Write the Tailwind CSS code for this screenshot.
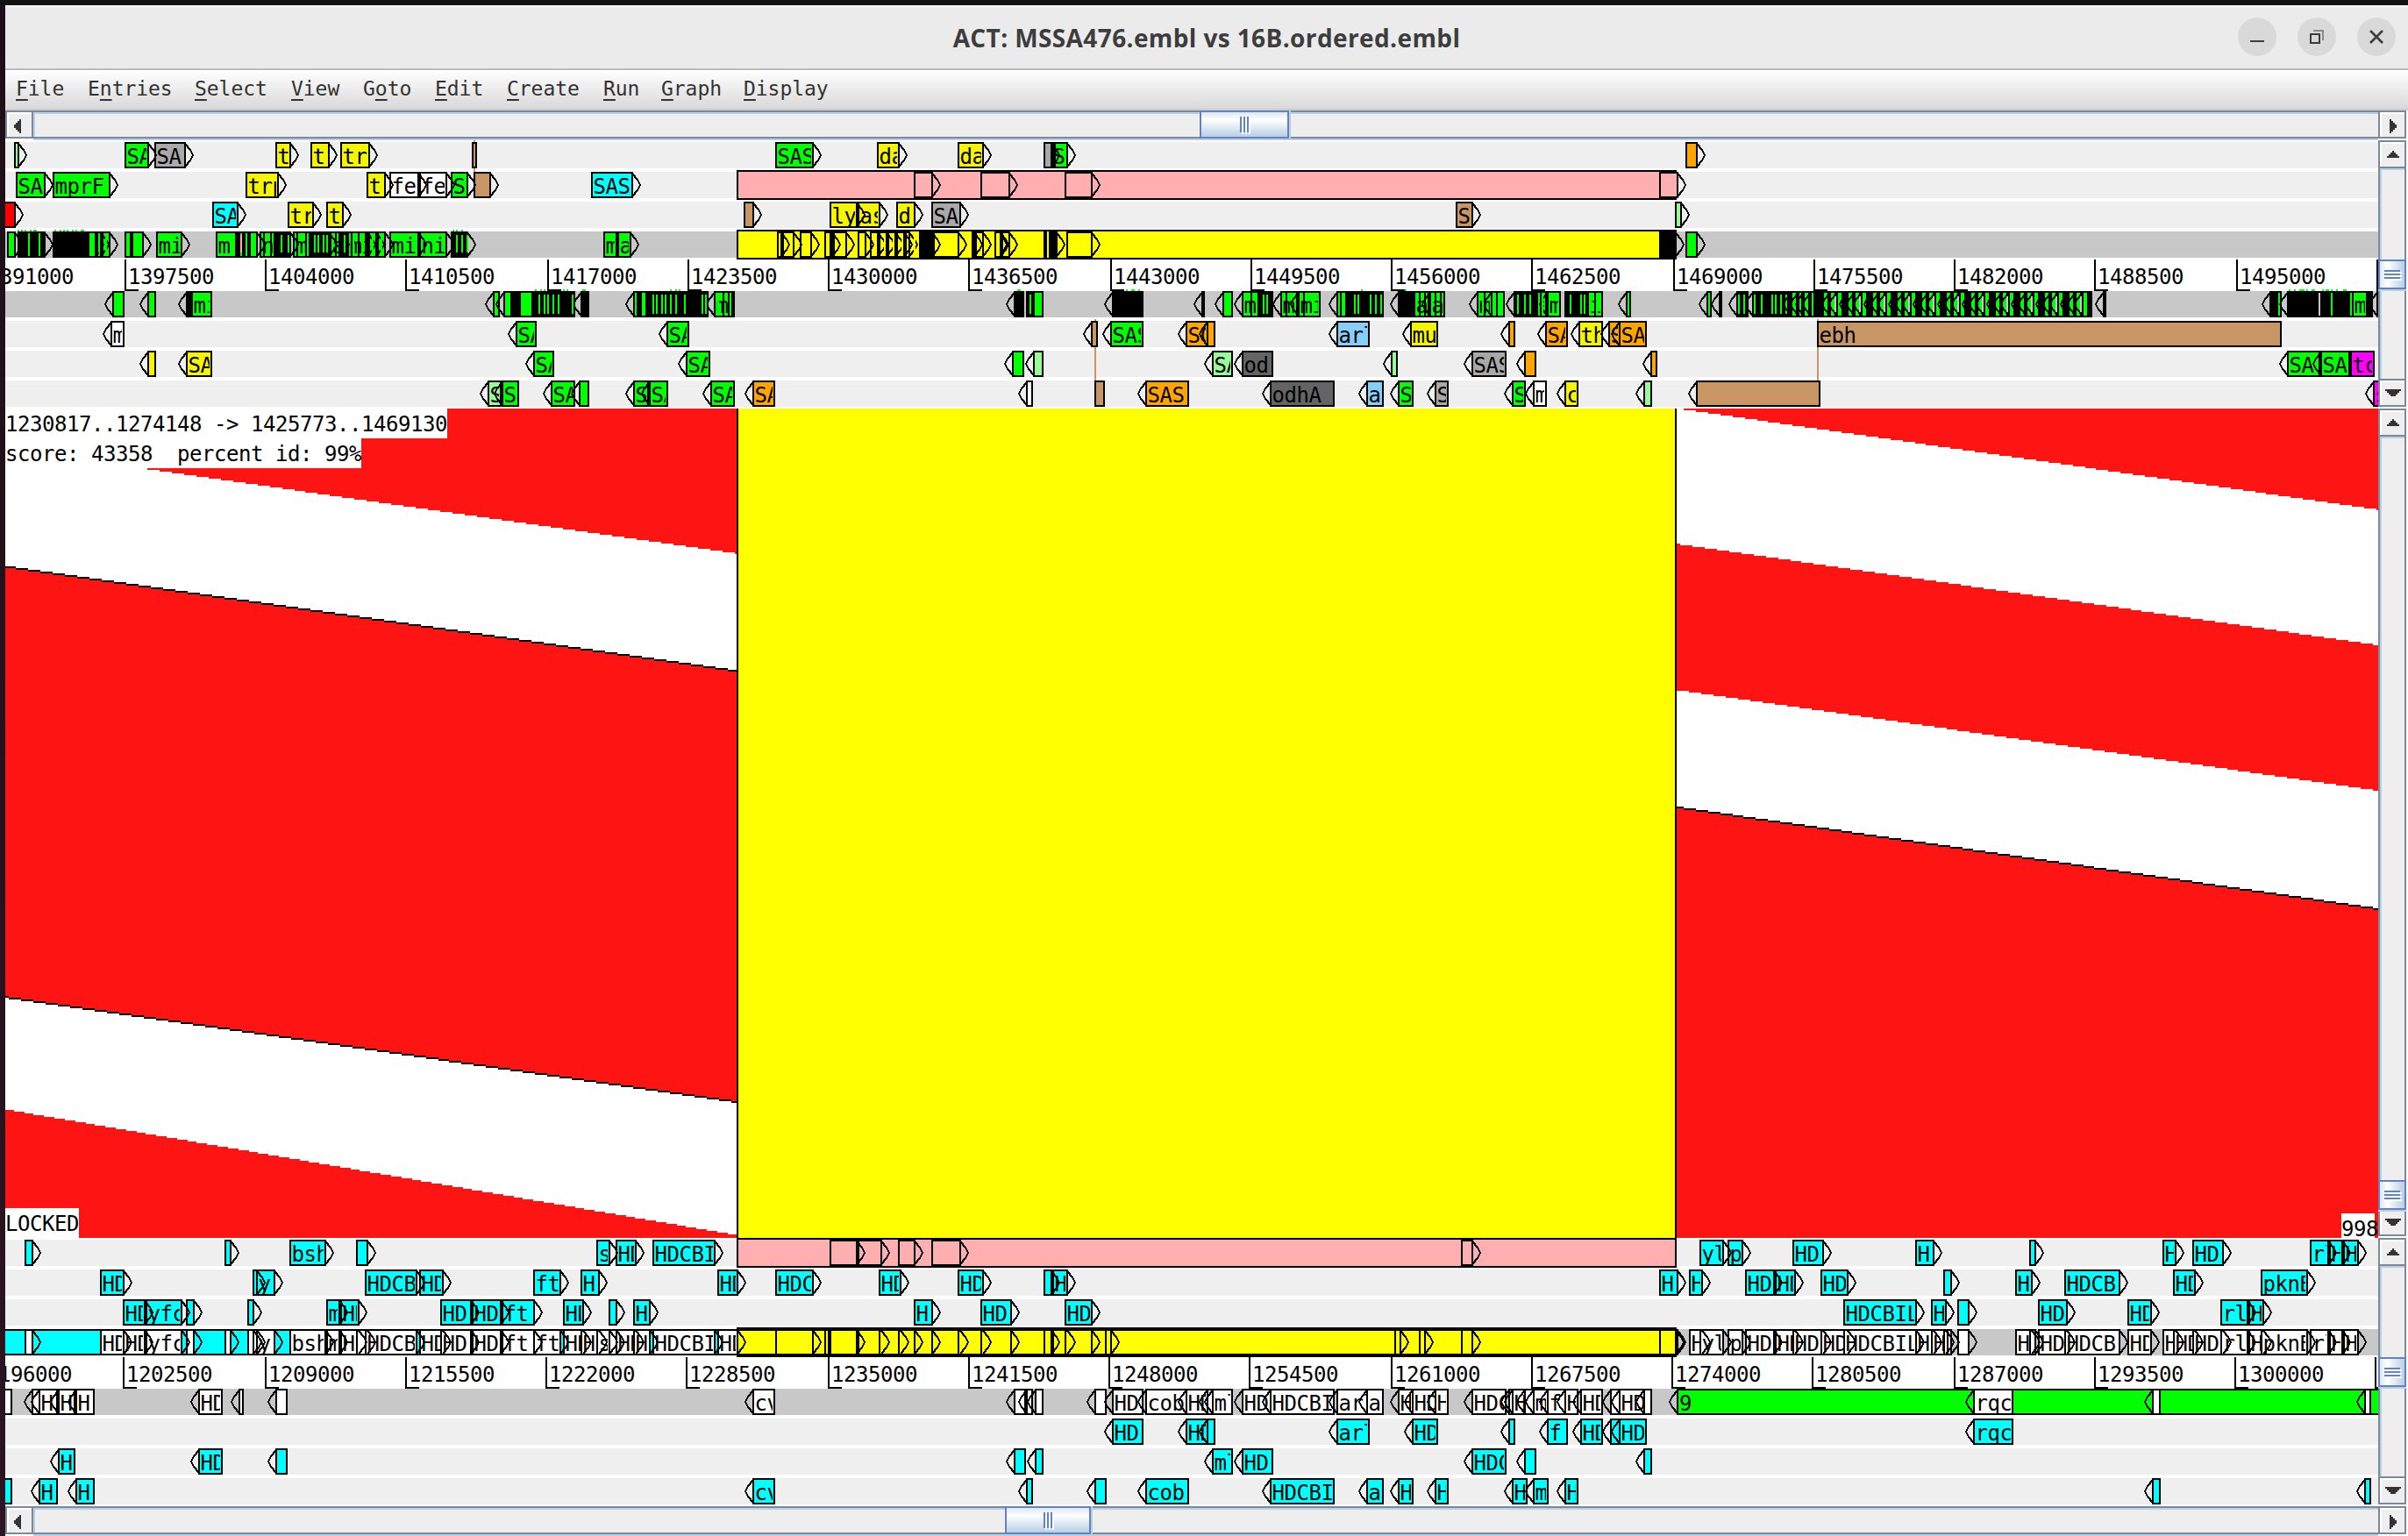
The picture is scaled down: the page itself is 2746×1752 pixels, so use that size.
<!DOCTYPE html>
<html lang="en">
<head>
<meta charset="utf-8">
<title>ACT: MSSA476.embl vs 16B.ordered.embl</title>
<script src="https://cdn.jsdelivr.net/npm/@tailwindcss/browser@4"></script>
</head>
<body class="w-[2746px] h-[1752px] overflow-hidden bg-[#131313] pt-[6px] pl-[6px] bg-linear-to-b from-[#1d0f17] to-[#2b1520]">
<div class="fixed top-0 left-0 h-[6px] w-full bg-[#131313]"></div>
<div class="flex h-[1746px] w-[2740px] flex-col bg-white">
  <header class="relative flex h-[74px] shrink-0 items-center justify-center border-t-2 border-b-2 border-t-white border-b-[#bbbbbb] bg-[#ebebeb]">
    <h1 id="title" class="font-['Open_Sans',sans-serif] text-[28px] leading-none font-bold tracking-[0.39px] whitespace-nowrap text-[#3d3d3d]">ACT: MSSA476.embl vs 16B.ordered.embl</h1>
    <div class="absolute top-[12px] right-[14px] flex gap-[24px]">
      <svg class="size-[44px] rounded-full bg-[#d9d9d9]" viewBox="0 0 44 44"><path d="M14 27h16" stroke="#3d3d3d" stroke-width="2"/></svg>
      <svg class="size-[44px] rounded-full bg-[#d9d9d9]" viewBox="0 0 44 44" fill="none"><path d="M18 15h11v11" stroke="#8b8b8b" stroke-width="2"/><path d="M15 19h10v10h-10z" stroke="#3d3d3d" stroke-width="2"/></svg>
      <svg class="size-[44px] rounded-full bg-[#d9d9d9]" viewBox="0 0 44 44"><path d="M15 15l14 14M29 15l-14 14" stroke="#3d3d3d" stroke-width="2.6"/></svg>
    </div>
  </header>
  <nav class="flex h-[46px] shrink-0 border-b-2 border-[#cccccc] bg-linear-to-b from-white to-[#d9d9d9] pt-[7px] pl-[12px] font-['DejaVu_Sans_Mono',monospace] text-[23px] leading-[28px] tracking-[-0.05px] text-[#333333]">
    <span class="w-[82px]"><u class="underline-offset-4 decoration-2">F</u>ile</span>
    <span class="w-[122px]">E<u class="underline-offset-4 decoration-2">n</u>tries</span>
    <span class="w-[110px]"><u class="underline-offset-4 decoration-2">S</u>elect</span>
    <span class="w-[82px]"><u class="underline-offset-4 decoration-2">V</u>iew</span>
    <span class="w-[82px]">G<u class="underline-offset-4 decoration-2">o</u>to</span>
    <span class="w-[82px]"><u class="underline-offset-4 decoration-2">E</u>dit</span>
    <span class="w-[110px]"><u class="underline-offset-4 decoration-2">C</u>reate</span>
    <span class="w-[66px]"><u class="underline-offset-4 decoration-2">R</u>un</span>
    <span class="w-[94px]"><u class="underline-offset-4 decoration-2">G</u>raph</span>
    <span><u class="underline-offset-4 decoration-2">D</u>isplay</span>
  </nav>
  <div class="hbar flex h-[34px] shrink-0 pr-[2px]" data-at="1330" data-len="102"></div>
  <main class="flex shrink-0 flex-col">
    <section class="flex h-[306px]">
      <svg id="top" class="h-[306px] w-[2706px] shrink-0" viewBox="6 160 2706 306" shape-rendering="crispEdges"></svg>
      <div class="vbar flex h-[304px] w-[32px] flex-col" data-at="104" data-len="34"></div>
    </section>
    <section class="flex h-[946px]">
      <svg id="cmp" class="h-[946px] w-[2706px] shrink-0" viewBox="6 466 2706 946" shape-rendering="crispEdges"></svg>
      <div class="vbar flex h-[944px] w-[32px] flex-col" data-at="848" data-len="34"></div>
    </section>
    <section class="flex h-[306px]">
      <svg id="bottom" class="h-[306px] w-[2706px] shrink-0" viewBox="6 1412 2706 306" shape-rendering="crispEdges"></svg>
      <div class="vbar flex h-[304px] w-[32px] flex-col" data-at="104" data-len="34"></div>
    </section>
  </main>
  <div class="hbar flex h-[34px] shrink-0 pr-[2px]" data-at="1108" data-len="98"></div>
</div>

<script>
// ---- scroll bars -------------------------------------------------------
document.querySelectorAll('.hbar').forEach(el => {
  el.innerHTML = `
  <div class="h-[32px] w-[32px] shrink-0 border-2 border-[#7a8a99] bg-[#eeeeee] shadow-[inset_2px_2px_0_#fff]"><svg class="h-[28px] w-[28px]" viewBox="0 0 28 28" shape-rendering="crispEdges"><path fill="#333" d="M16 8v16h-2v-2h-2v-2h-2v-2h-2v-4h2v-2h2v-2h2v-2z"/></svg></div>
  <div class="relative h-[34px] grow border-b-2 border-[#b8cfe5]">
    <div class="h-[32px] border-t-2 border-b-2 border-[#7a8a99] bg-[#eeeeee] shadow-[inset_2px_2px_0_#b8cfe5]"></div>
    <div class="absolute top-0 flex h-[32px] items-center justify-center gap-[2px] border-2 border-[#6382bf] bg-linear-to-b from-[#dbe7f3] via-white via-30% to-[#b8cfe5] shadow-[2px_0_0_#b8cfe5]" style="left:${el.dataset.at}px;width:${el.dataset.len}px">
      <i class="h-[18px] w-[2px] bg-[#6382bf] shadow-[2px_2px_0_#fff]"></i><i class="h-[18px] w-[2px] bg-[#6382bf] shadow-[2px_2px_0_#fff]"></i><i class="h-[18px] w-[2px] bg-[#6382bf] shadow-[2px_2px_0_#fff]"></i>
    </div>
  </div>
  <div class="h-[32px] w-[32px] shrink-0 border-2 border-[#7a8a99] bg-[#eeeeee] shadow-[inset_2px_2px_0_#fff]"><svg class="h-[28px] w-[28px]" viewBox="0 0 28 28" shape-rendering="crispEdges"><path fill="#333" d="M11 8v16h2v-2h2v-2h2v-2h2v-4h-2v-2h-2v-2h-2v-2z"/></svg></div>`;
});
document.querySelectorAll('.vbar').forEach(el => {
  el.innerHTML = `
  <div class="h-[32px] w-[32px] shrink-0 border-2 border-[#7a8a99] bg-[#eeeeee] shadow-[inset_2px_2px_0_#fff]"><svg class="h-[28px] w-[28px]" viewBox="0 0 28 28" shape-rendering="crispEdges"><path fill="#333" d="M8 18h14v-2h-2v-2h-2v-2h-2v-2h-2v2h-2v2h-2v2h-2z"/></svg></div>
  <div class="relative grow">
    <div class="h-full border-l-2 border-r-2 border-[#7a8a99] bg-[#eeeeee] shadow-[inset_2px_2px_0_#b8cfe5]"></div>
    <div class="absolute left-0 flex w-[32px] flex-col items-center justify-center gap-[2px] border-2 border-[#6382bf] bg-linear-to-r from-[#dbe7f3] via-white via-30% to-[#b8cfe5] shadow-[0_2px_0_#b8cfe5]" style="top:${el.dataset.at}px;height:${el.dataset.len}px">
      <i class="h-[2px] w-[18px] bg-[#6382bf] shadow-[2px_2px_0_#fff]"></i><i class="h-[2px] w-[18px] bg-[#6382bf] shadow-[2px_2px_0_#fff]"></i><i class="h-[2px] w-[18px] bg-[#6382bf] shadow-[2px_2px_0_#fff]"></i>
    </div>
  </div>
  <div class="h-[32px] w-[32px] shrink-0 border-2 border-[#7a8a99] bg-[#eeeeee] shadow-[inset_2px_2px_0_#fff]"><svg class="h-[28px] w-[28px]" viewBox="0 0 28 28" shape-rendering="crispEdges"><path fill="#333" d="M6 10h18v2h-2v2h-2v2h-2v2h-6v-2h-2v-2h-2v-2h-2z"/></svg></div>`;
});

// ---- drawing helpers ---------------------------------------------------
const COL = {g:'#00ff00',G:'#a9a9a9',y:'#f5f500',Y:'#ffff00',w:'#ffffff',b:'#c89664',c:'#00ffff',o:'#ffa500',l:'#98fb98',p:'#ffafaf',s:'#87cefa',D:'#646464',r:'#ff0000',m:'#ff00ff',k:'#000000'};
const rect = (x,y,w,h,f) => `<rect x="${x}" y="${y}" width="${w}" height="${h}" fill="${f}"/>`;
const text = (x,y,s) => `<text x="${x}" y="${y}" xml:space="preserve" font-family="DejaVu Sans Mono, monospace" font-size="24" letter-spacing="-0.45">${s}</text>`;
// Tile pages: a feature is given as [left, right, colour, label] in page units (1 px = 2.24 units).
const px = (page, v) => Math.round((page + v / 2.24) / 2) * 2;
function parse(spec) {
  const out = [];
  for (const page in spec) for (const item of spec[page].trim().split(/\s+/)) {
    const [l, r, c, t = ''] = item.split(',');
    const flags = c.slice(1);
    out.push({l: px(+page, +l), r: px(+page, +r), c: c[0], plain: flags.includes('!'), t});
  }
  return out.sort((a, b) => a.l - b.l);
}
function chevron(f, y, dir) {
  if (f.plain) return '';
  const x = dir > 0 ? f.r - 1 : f.l + 1, d = dir;
  return `<polyline fill="none" stroke="#000" stroke-width="2" points="${x},${y+2} ${x+2*d},${y+4} ${x+4*d},${y+7} ${x+6*d},${y+9} ${x+9*d},${y+15} ${x+6*d},${y+21} ${x+4*d},${y+23} ${x+2*d},${y+26} ${x},${y+28}"/>`;
}
function features(list, y, dir) {
  let s = '';
  for (const f of list) {
    const w = Math.max(4, f.r - f.l);
    s += rect(f.l, y, w, 30, '#000') + (w > 4 ? rect(f.l + 2, y + 2, w - 4, 26, COL[f.c]) : '');
    if (f.t) s += `<svg x="${f.l+2}" y="${y+2}" width="${Math.max(0,w-5)}" height="26">${text(0.5, 23, f.t)}</svg>`;
  }
  for (const f of list) s += chevron(f, y, dir);
  return s;
}
const bands = (ys, dark) => ys.map(y => rect(6, y, 2706, 30, y === dark ? '#c8c8c8' : '#efefef')).join('');
function ruler(y, ticks, start) {
  let s = rect(6, y, 2706, 38, '#fff') + text(ticks[0] - 160 + 4, y + 30, start);
  ticks.forEach((x, i) => {
    s += rect(x, y + 2, 2, 36, '#000') + rect(x, y + 36, 16, 2, '#000');
    if (x < 2700) s += text(x + 4, y + 30, start + 6500 * (i + 1));
  });
  return s;
}
const stripes = (page, y, list, colour = '#00ff00', h = 26) => list.map(v => rect(px(page, v), y, 2, h, colour)).join('');
const frame = (x, y, w, h, f) => rect(x, y, w, h, '#000') + rect(x + 2, y + 2, w - 4, h - 4, f);
const range = (a, b, step) => { const o = []; for (let v = a; v < b; v += step) o.push(v); return o; };

// ---- upper sequence ----------------------------------------------------
{
  let s = rect(6, 160, 2706, 306, '#fff') + bands([162,196,230,264,366,400,434], 264) + rect(6, 332, 2706, 30, '#c8c8c8');
  s += ruler(294, [142,302,462,624,784,944,1104,1266,1426,1586,1746,1908,2068,2228,2388,2550,2710], 1391000);
  s += rect(540, 160, 2, 38, COL.b) + rect(1248, 364, 2, 72, COL.b) + rect(2072, 364, 2, 72, COL.b);
  s += features(parse({0:'37,50,l 319,381,g,SA 394,475,G,SA 704,744,y,t 794,841,y,t 870,944,y,tr 1206,1218,b!', 680:'458,555,g,SAS 718,775,y,da 924,990,y,da 1143,1166,G! 1162,1205,g,S', 1360:'1260,1290,o'}), 162, 1);
  s += stripes(680, 162, [1160,1164,1168], '#000', 30) + chevron({r: px(680, 1166)}, 162, 1);
  s += features(parse({0:'40,116,g,SA 135,282,g,mprF 628,712,y,trp 937,986,y,t 995,1072,w,fe 1072,1142,w,fe 1152,1196,g,S 1211,1254,b', 680:'-12,93,c,SAS'}), 196, 1);
  s += frame(840, 194, 1072, 34, COL.p) + features(parse({680:'812,860,p 982,1057,p 1197,1267,p', 1360:'1193,1239,p'}), 196, 1);
  s += features(parse({0:'0,40,r 543,608,c,SA 736,802,y,tr 834,878,y,t', 680:'377,402,b 597,668,y,ly 666,726,y,as 767,815,y,d 857,932,G,SA', 1360:'673,716,b,S 1233,1249,l'}), 230, 1);
  // one-line summary of the forward strand
  s += features(parse({0:'18,40,g 44,116,k 134,225,k! 225,245,g 245,262,g 262,282,g 319,334,g! 334,368,g 400,466,g,mi 552,606,g,m! 606,640,k! 636,660,g 662,705,g,n 705,742,k 747,795,g,m 795,842,k 842,875,g,a 875,890,k! 888,940,g,mi 940,962,g 962,986,g 995,1072,g,mi 1072,1142,g,ni 1152,1196,k', 680:'19,52,g!,m 52,90,g,a', 1360:'1260,1290,g'}), 264, 1);
  s += stripes(0, 266, [72,100,612,626], '#00ff00') + stripes(0, 268, [230,238,250,270,642,652,715,736,802,812,824,834,880,900,925,950,970,1166,1180,1190], '#00ff00', 20);
  s += stripes(0, 264, [656,672,690,758,780,856,866,896,914,932], '#000', 30);
  s += stripes(0, 268, [612], '#ffafaf', 20) + stripes(0, 262, [44,54,64,76,84,90,139,152,162,170,182,194,204,210,1156,1166,1178], '#00ff00', 2);
  s += frame(840, 262, 1072, 34, COL.Y);
  s += features(parse({680:'461,475,Y 475,508,Y 518,550,Y 582,602,Y! 600,606,Y 606,640,Y 668,692,Y 700,722,Y 722,745,Y 745,765,Y 765,790,Y 790,800,Y 825,858,k 858,926,Y 960,968,Y 968,988,Y 1018,1030,Y 1030,1036,Y 1036,1057,Y 1143,1150,Y! 1157,1178,k 1202,1267,Y', 1360:'1193,1236,k'}), 264, 1);
  s += stripes(680, 266, [735,756,778,812,1152,1024], '#ffff00') + rect(840, 262, 1072, 2, '#000') + rect(840, 294, 1072, 2, '#000');
  // one-line summary of the reverse strand
  s += features(parse({0:'288,317,g 377,398,g 475,487,k 487,541,g!,mi 1259,1277,g 1286,1310,g 1310,1328,k! 1326,1362,g 1362,1470,k! 1482,1504,k', 680:'94,114,g 114,132,g! 132,180,k! 180,286,k! 302,353,g,m 1066,1095,k 1099,1118,k! 1116,1141,g! 1318,1397,k 1546,1554,k', 1360:'22,31,k 76,103,g 125,170,g,m 166,206,k! 224,268,g,m 268,326,g,mi 368,400,g 400,487,k! 524,563,k 563,605,g,a 605,644,g,a 726,765,g,m 763,797,g 820,903,k 876,903,g,a 903,943,g,mi 950,1010,k! 1010,1048,g,i 1108,1120,g 1313,1326,g 1344,1353,k 1388,1420,k 1427,1568,k', 2046:'0,68,k! 728,745,g! 745,757,g 788,797,k 1212,1230,k 1232,1245,g! 1259,1424,k 1424,1466,g!,mi 1466,1478,k! 1487,1500,k'}), 332, -1);
  s += stripes(0, 336, [1376,1388,1398,1412,1424,1460], '#00ff00', 22) + stripes(680, 336, [120,142,152,164,175,190,202,224,270,278,310,1108], '#00ff00', 22);
  s += stripes(680, 332, [102,322,334,346], '#000', 30) + stripes(1360, 332, [146,238,282,376,388,576,592,618,632,744,776,888,1026], '#000', 30);
  s += stripes(1360, 336, [160,178,190,410,422,452,466,478,740,780,828,846,862,890,965,988,1000,1030,1392,1408,1432,1452,1478,1488,1502,1514,1526,1542,1556], '#00ff00', 22);
  s += features(range(-8, 46, 16).map(v => ({l: px(2046, v), r: px(2046, v + 15), c: 'g', t: ''})), 332, -1);
  for (let i = 0; i < 11; i++) {
    const o = 66 + i * 62.7;
    s += rect(px(2046, o), 332, 30, 30, '#000');
    for (let k = 0; k < 3; k++) { const v = o + 4 + k * 18.5; s += features([{l: px(2046, v), r: px(2046, v + 18), c: 'g', t: ''}], 332, -1); }
    s += stripes(2046, 338, [o + 39], '#c8c8c8', 18);
  }
  s += stripes(2046, 334, [1372,1418], '#00ff00') + stripes(2046, 334, [1340], '#c8c8c8') + stripes(2046, 330, [1263,1276,1288,1294,1300,1310,1320,1326,1348,1356,1362,1372,1384,1400,1406], '#00ff00', 2);
  s += stripes(0, 330, [1368,1380,1390,1436,1448,1488,1492], '#00ff00', 2) + rect(624, 330, 16, 3, '#000') + stripes(680, 330, [190,202,212,1074,1080,1354,1366,1372,1386], '#00ff00', 2) + stripes(1360, 330, [428,544], '#00ff00', 2);
  s += features(parse({0:'284,317,w,m 1318,1370,g,SA', 680:'180,236,g,SA 1264,1280,b 1313,1397,g,SAS 1506,1564,o,SC', 1360:'34,57,o 368,451,s,arl 557,627,y,mu 808,824,o 901,958,o,SA 987,1048,y,thr 1063,1095,o,S 1090,1160,o,SA', 2046:'59,1245,b!,ebh'}), 366, -1);
  s += features(parse({0:'377,398,y 475,541,y,SA 1362,1415,g,SA', 680:'229,291,g,SA 1063,1092,g 1116,1141,l', 1360:'50,103,l,SA 125,206,D,od 507,523,l 713,801,G,SAS 848,877,o 1171,1186,o', 2046:'1259,1344,g,SA 1345,1420,g,SA 1422,1482,m!,tc'}), 400, -1);
  s += features(parse({0:'1245,1282,l,S 1282,1325,g,S 1407,1470,g,SA 1478,1504,g', 680:'94,133,g,S 133,183,g,SA 291,353,g,SA 399,456,o,SA 1099,1115,w 1273,1298,b! 1403,1513,o,SAS', 1360:'197,362,D,odhA 444,487,s,a 524,563,g,S 618,653,G,S 816,851,g,S 869,904,w,m 950,985,y,c 1151,1173,l 1287,1603,b', 2046:'1479,1500,m,s'}), 434, -1);
  document.getElementById('top').innerHTML = s;
}

// ---- comparison --------------------------------------------------------
{
  // A sloped edge sampled on a 2 px grid, left to right.
  const edge = (x1, y1, x2, y2) => {
    const p = [];
    for (let x = x1; x < x2; x += 2) { const y = Math.round((y1 + (y2 - y1) * (x - x1) / (x2 - x1)) / 2) * 2; p.push([x, y], [x + 2, y]); }
    return p;
  };
  const poly = (a, b) => `<polygon fill="#ff1414" points="${a.concat(b.slice().reverse()).join(' ')}"/>`;
  const line = e => { let o = ''; for (let i = 0; i < e.length; i += 2) o += `M${e[i][0]} ${e[i][1]}h2v2h-2z`; return `<path d="${o}"/>`; };
  const L1 = edge(6,512,840,631.5), L2 = edge(6,645.5,840,764.5), L3 = edge(6,1136.5,840,1256), L4 = edge(6,1265.5,840,1409);
  const R1 = edge(1912,466,2712,581.5), R2 = edge(1912,620.5,2712,736), R3 = edge(1912,787,2712,902), R4 = edge(1912,920,2712,1036);
  let s = rect(6, 466, 2706, 946, '#fff');
  s += poly([[6,466],[840,466]], L1) + poly(L2, L3) + poly(L4, [[6,1412],[840,1412]]) + line(L2) + line(L3);
  s += poly([[1912,466],[2712,466]], R1) + poly(R2, R3) + poly(R4, [[1912,1412],[2712,1412]]) + line(R4);
  s += rect(840, 466, 1072, 946, '#000') + rect(842, 466, 1068, 946, '#ffff00');
  s += rect(6, 466, 504, 34, '#fff') + rect(6, 500, 406, 34, '#fff') + rect(6, 1378, 84, 34, '#fff') + rect(2670, 1384, 38, 28, '#fff');
  s += text(6, 492, '1230817..1274148 -&gt; 1425773..1469130') + text(6, 525.5, 'score: 43358  percent id: 99%') + text(6, 1404, 'LOCKED') + text(2670, 1410, '998');
  document.getElementById('cmp').innerHTML = s;
}

// ---- lower sequence ----------------------------------------------------
{
  const f1 = parse({0:'64,85,c 574,590,c 739,832,c,bsh 910,941,c 1524,1558,c,s', 680:'50,103,c,HD 144,304,c,HDCBI', 1360:'1296,1356,c,yl 1367,1406,c,p', 2046:'-4,76,c,HD 310,358,c,H 601,617,c 942,976,c,H 1018,1097,c,HD 1318,1367,c,rl 1367,1403,c,H 1403,1443,c,H'});
  const p1 = parse({680:'597,668,p 668,729,p 772,815,p 857,932,p', 1360:'686,716,p'});
  const f2 = parse({0:'256,318,c,HD 646,658,c 656,703,c,y 932,1065,c,HDCB 1072,1133,c,HD 1363,1433,c,ft 1484,1532,c,H', 680:'310,362,c,HD 458,555,c,HDC 722,780,c,HD 924,990,c,HD 1143,1166,c 1166,1205,c,H', 1360:'1193,1240,c,H 1269,1303,c,H 1412,1487,c,HD 1487,1541,c,HD', 2046:'68,138,c,HD 382,403,c 566,609,c,H 691,832,c,HDCB 969,1025,c,HD 1193,1312,c,pknB'});
  const f3 = parse({0:'315,372,c,HD 372,465,c,yfc 475,497,c 633,649,c 834,868,c,m 868,918,c,HD 1125,1206,c,HD 1206,1281,c,HD 1281,1366,c,ft: 1439,1491,c,HD', 680:'32,53,c 95,138,c,H 812,860,c,H 982,1061,c,HD 1197,1267,c,HD', 2046:'126,313,c,HDCBIL 350,390,c,H 418,448,c 624,698,c,HD 852,914,c,HD 1090,1160,c,rl 1160,1200,c,H'});
  const r2 = parse({680:'1318,1397,c,HD 1506,1564,c,HD', 1360:'34,57,c 368,451,c,arl 560,627,c,HD 808,824,c 905,958,c,f: 991,1048,c,HD 1067,1095,c 1090,1160,c,HD', 2046:'458,559,c,rqc'});
  const r3 = parse({0:'147,192,c,H 507,568,c,HD 703,735,c', 680:'1066,1097,c 1120,1141,c', 1360:'50,103,c,ml 125,206,c,HD 713,801,c,HDC 848,877,c 1151,1173,c'});
  const r4 = parse({0:'0,31,c! 98,147,c,H 192,241,c,H', 680:'399,456,c,cv 1099,1115,c 1273,1303,c 1403,1513,c,cob', 1360:'197,362,c,HDCBI 444,487,c,a 524,563,c,H 618,653,c,H 816,856,c,H 869,908,c,m 950,985,c,H', 2046:'914,935,c 1457,1473,c'});
  const byLeft = (a, b) => a.l - b.l;
  const fwd = [...f1, ...p1, ...f2, ...f3, ...parse({680:'582,597,c! 1300,1318,c', 1360:'513,531,c 580,595,c', 2046:'600,616,c 390,403,c'})].sort(byLeft);
  const white = l => l.map(f => ({...f, c: 'w'}));
  let s = rect(6, 1412, 2706, 306, '#fff') + bands([1414,1448,1482,1516], 1516) + bands([1584,1618,1652,1686], 1584);
  s += ruler(1546, [140,302,462,622,782,944,1104,1264,1424,1586,1746,1906,2066,2228,2388,2548,2708], 1196000);
  s += features(f1, 1414, 1) + frame(840, 1412, 1072, 34, COL.p) + features(p1, 1414, 1);
  s += features(f2, 1448, 1) + features(f3, 1482, 1);
  s += rect(6, 1516, 834, 30, '#000') + rect(6, 1518, 834, 26, COL.c);
  s += features(white(fwd.filter(f => f.l < 838)), 1516, 1);
  s += features(white(fwd.filter(f => f.l >= 1890)), 1516, 1);
  s += rect(840, 1514, 1072, 34, '#000') + rect(842, 1518, 1068, 26, COL.Y);
  s += features(fwd.filter(f => f.l >= 838 && f.l < 1905).map(f => ({...f, c: 'Y', t: '', r: Math.min(f.r, 1912)})), 1516, 1);
  s += chevron({r: 842}, 1516, 1);
  s += rect(1912, 1584, 800, 30, '#000') + rect(1914, 1586, 798, 26, COL.g) + text(1915, 1609, '9') + chevron({l: 1912}, 1584, -1);
  s += features(white([...r2, ...r3, ...r4, ...parse({0:'81,103,c 610,622,c'})].sort(byLeft)), 1584, -1);
  s += features(r2, 1618, -1) + features(r3, 1652, -1) + features(r4, 1686, -1);
  document.getElementById('bottom').innerHTML = s;
}
</script>
</body>
</html>
